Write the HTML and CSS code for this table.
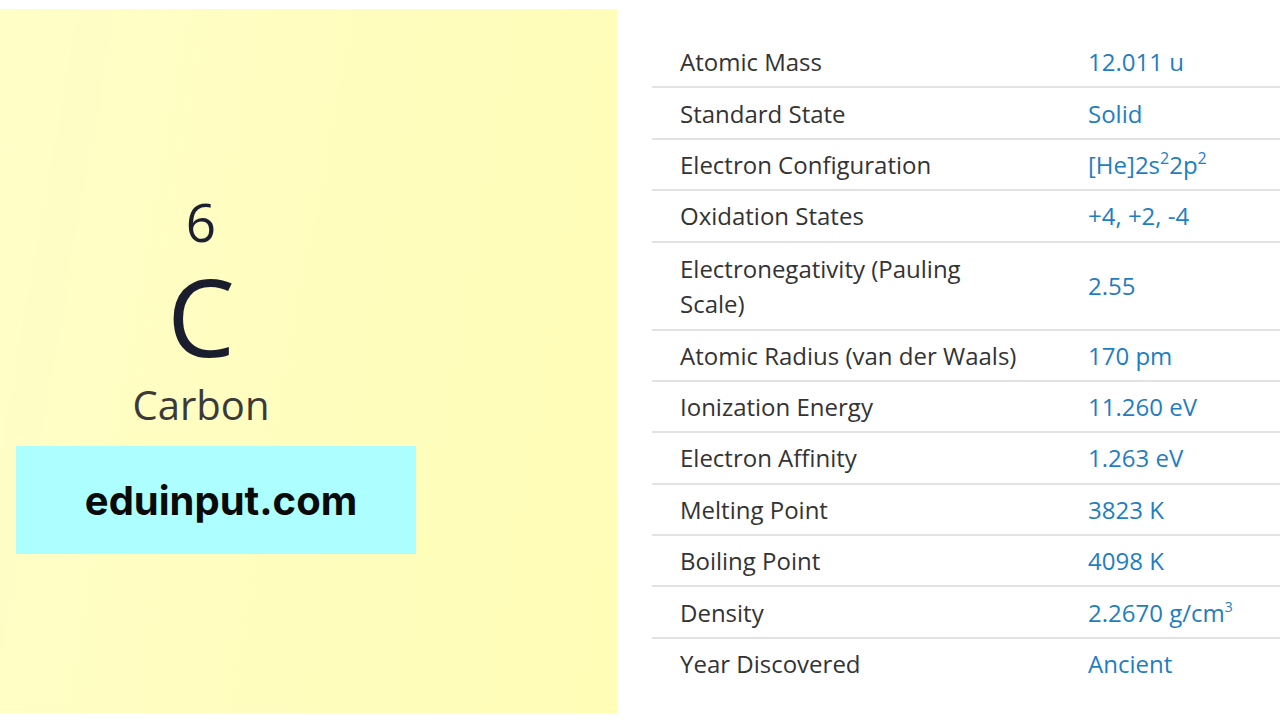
FILE: index.html
```html
<!DOCTYPE html>
<html>
<head>
<meta charset="utf-8">
<link rel="stylesheet" href="styles.css">
</head>
<body>
<div class="page">
  <section class="card">
    <div class="element">
      <div class="number">6</div>
      <div class="symbol">C</div>
      <div class="name">Carbon</div>
    </div>
    <div class="brand">eduinput.com</div>
  </section>
  <section class="props">
    <table class="table">
      <tr><td class="label">Atomic Mass</td><td class="value">12.011 u</td></tr>
      <tr><td class="label">Standard State</td><td class="value">Solid</td></tr>
      <tr><td class="label">Electron Configuration</td><td class="value">[He]2s<sup>2</sup>2p<sup>2</sup></td></tr>
      <tr><td class="label">Oxidation States</td><td class="value">+4, +2, -4</td></tr>
      <tr class="tall"><td class="label">Electronegativity (Pauling Scale)</td><td class="value">2.55</td></tr>
      <tr><td class="label">Atomic Radius (van der Waals)</td><td class="value">170 pm</td></tr>
      <tr><td class="label">Ionization Energy</td><td class="value">11.260 eV</td></tr>
      <tr><td class="label">Electron Affinity</td><td class="value">1.263 eV</td></tr>
      <tr><td class="label">Melting Point</td><td class="value">3823 K</td></tr>
      <tr><td class="label">Boiling Point</td><td class="value">4098 K</td></tr>
      <tr><td class="label">Density</td><td class="value">2.2670 g/cm<sup class="small">3</sup></td></tr>
      <tr class="last"><td class="label">Year Discovered</td><td class="value">Ancient</td></tr>
    </table>
  </section>
</div>
</body>
</html>
```
FILE: styles.css
```css
html, body {
  margin: 0;
  padding: 0;
  background: #ffffff;
}
.page {
  display: flex;
  width: 1280px;
  height: 720px;
  overflow: hidden;
  font-family: "Open Sans", "Noto Sans", sans-serif;
}
.card {
  margin-top: 9px;
  width: 617px;
  height: 704px;
  background: linear-gradient(100deg, #fffec8 0%, #fffdbe 50%, #fffdb6 100%);
  display: flex;
  flex-direction: column;
  align-items: flex-start;
  padding-top: 183px;
  box-sizing: border-box;
}
.element {
  width: 370px;
  margin-left: 16px;
  display: flex;
  flex-direction: column;
  align-items: center;
}
.number {
  font-size: 53px;
  line-height: 60px;
  color: #1d2030;
}
.symbol {
  font-size: 108px;
  line-height: 110px;
  color: #1a1d2e;
  margin-top: 9px;
}
.name {
  font-size: 40px;
  line-height: 50px;
  color: #3a3a3a;
  margin-top: 9px;
}
.brand {
  margin-top: 16px;
  margin-left: 16px;
  width: 400px;
  height: 108px;
  background: #adfeff;
  display: flex;
  align-items: center;
  justify-content: center;
  font-family: "Inter", "Lato", sans-serif;
  font-weight: 700;
  font-size: 40px;
  color: #0a0a0a;
  padding-left: 10px;
  box-sizing: border-box;
}
.props {
  margin-left: 35px;
  padding-top: 37px;
  flex: 1;
}
.table {
  width: 100%;
  border-collapse: collapse;
  font-size: 24px;
}
.table td {
  border-bottom: 2px solid #e2e2e2;
  padding: 7.2px 0 7.2px 28px;
  line-height: 35px;
  vertical-align: middle;
}
.table tr.tall td {
  padding-top: 8px;
  padding-bottom: 8px;
}
.table tr.last td {
  border-bottom: none;
}
.table td.label {
  width: 350px;
  padding-right: 30px;
  color: #333333;
}
.value {
  color: #1f7ec0;
}
.value sup {
  font-size: 16px;
  line-height: 0;
  vertical-align: 10px;
}
.value sup.small {
  font-size: 14px;
}
```
